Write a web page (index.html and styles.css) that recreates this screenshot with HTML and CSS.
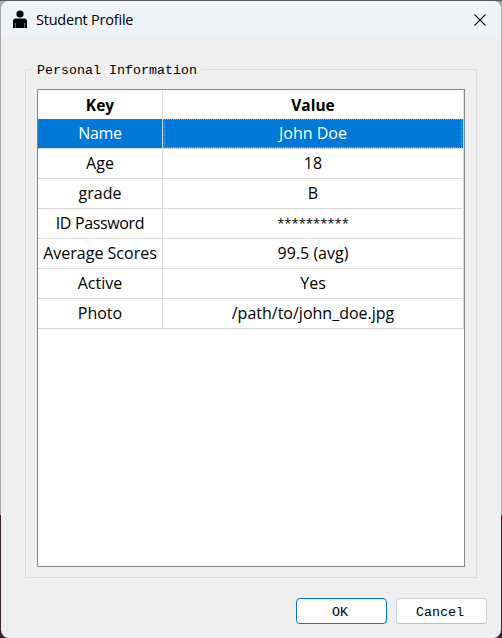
FILE: index.html
```
<!DOCTYPE html>
<html lang="en">
<head>
<meta charset="utf-8">
<title>Student Profile</title>
<link rel="stylesheet" href="styles.css">
</head>
<body>
<main class="window">
  <header class="titlebar">
    <svg class="person" width="16" height="20" viewBox="0 0 16 20"><circle cx="8" cy="4" r="3.600"/><path d="M4 8.500h8q3 0 3 3V18H1v-6.500q0-3 3-3z"/><path class="sleeve" d="M3.500 13v5M12.500 13v5"/></svg>
    <h1 class="title">Student Profile</h1>
    <svg class="close" width="14" height="14" viewBox="0 0 14 14"><path d="M1.300 1.300l11.400 11.400M12.700 1.300L1.300 12.700"/></svg>
  </header>
  <section class="group">
    <h2 class="legend"><span class="legend-text">Personal Information</span></h2>
    <div class="view">
      <div class="row head"><div class="cell">Key</div><div class="cell">Value</div></div>
      <div class="row selected"><div class="cell tight">Name</div><div class="cell focus">John Doe</div></div>
      <div class="row"><div class="cell">Age</div><div class="cell">18</div></div>
      <div class="row"><div class="cell">grade</div><div class="cell">B</div></div>
      <div class="row"><div class="cell tight">ID Password</div><div class="cell stars">**********</div></div>
      <div class="row"><div class="cell">Average Scores</div><div class="cell">99.5 (avg)</div></div>
      <div class="row"><div class="cell">Active</div><div class="cell">Yes</div></div>
      <div class="row"><div class="cell">Photo</div><div class="cell">/path/to/john_doe.jpg</div></div>
    </div>
  </section>
  <footer class="actions"><button class="btn primary">OK</button><button class="btn">Cancel</button></footer>
</main>
</body>
</html>
```
FILE: styles.css
```
* { box-sizing: border-box; }
body {
  margin: 0;
  height: 638px;
  padding: 1px 1px 0;
  overflow: hidden;
  background: linear-gradient(#5a585c 0 1px, #aaa8aa 1px 515px, #3b2030 515px);
  font-family: "Open Sans", "Noto Sans", sans-serif;
  color: #000;
}
.window {
  height: 637px;
  border-radius: 8px;
  overflow: hidden;
  background: #efefef;
  display: flex;
  flex-direction: column;
}
.titlebar {
  height: 37px;
  flex: none;
  display: flex;
  align-items: center;
  background: #eef3f9;
  padding: 0 14px 0 11px;
}
.person { margin-top: 1px; }
.sleeve { stroke: #888; stroke-width: .8; }
.title {
  flex: 1;
  margin: 0 0 0 8px;
  font-size: 14.5px;
  font-weight: 400;
  letter-spacing: -.22px;
  line-height: 20px;
}
.close { fill: none; stroke: #111; stroke-width: 1.2; }
.group {
  margin: 31px 24px 0;
  height: 509px;
  flex: none;
  border: 1px solid #dcdcdc;
  padding: 0 11px;
}
.legend {
  margin: -9px 0 0 -4px;
  height: 20px;
  font: 400 13.333px/20px "Liberation Mono", monospace;
}
.legend-text { display: inline-block; background: #efefef; padding: 0 4px; height: 20px; }
.view {
  margin-top: 8px;
  height: 478px;
  border: 1px solid #828790;
  background: #fff;
}
.row {
  display: grid;
  grid-template-columns: 125px 301px;
  height: 30px;
}
.cell {
  border-right: 1px solid #d8d8d8;
  border-bottom: 1px solid #d8d8d8;
  text-align: center;
  font-size: 16px;
  line-height: 29px;
  white-space: nowrap;
}
.head { height: 29px; }
.head .cell { border-bottom: 0; border-color: #e5e5e5; font-size: 15.5px; font-weight: 700; line-height: 30px; }
.tight { letter-spacing: -.35px; }
.selected .cell { background: #0078d7; color: #fff; }
.selected .focus {
  --dots: #ff8728 0 1px, #0078d7 1px 2px;
  background:
    repeating-linear-gradient(90deg, var(--dots)) 0 0 / 100% 1px no-repeat,
    repeating-linear-gradient(90deg, var(--dots)) 0 100% / 100% 1px no-repeat,
    repeating-linear-gradient(var(--dots)) 1px 0 / 1px 100% no-repeat,
    repeating-linear-gradient(var(--dots)) calc(100% - 1px) 0 / 1px 100% no-repeat,
    #0078d7;
  background-clip: padding-box;
}
.stars { font-size: 13px; }
.actions {
  display: flex;
  justify-content: flex-end;
  gap: 9px;
  padding: 20px 14px 0 0;
}
.btn {
  width: 91px;
  height: 26px;
  padding: 2px 3px 0 0;
  border: 1px solid #d0d0d0;
  border-bottom-color: #bbb;
  border-radius: 4px;
  background: #fdfdfd;
  font: 13.333px "Liberation Mono", monospace;
  color: #000;
}
.primary { border-color: #0078d4; }
```
